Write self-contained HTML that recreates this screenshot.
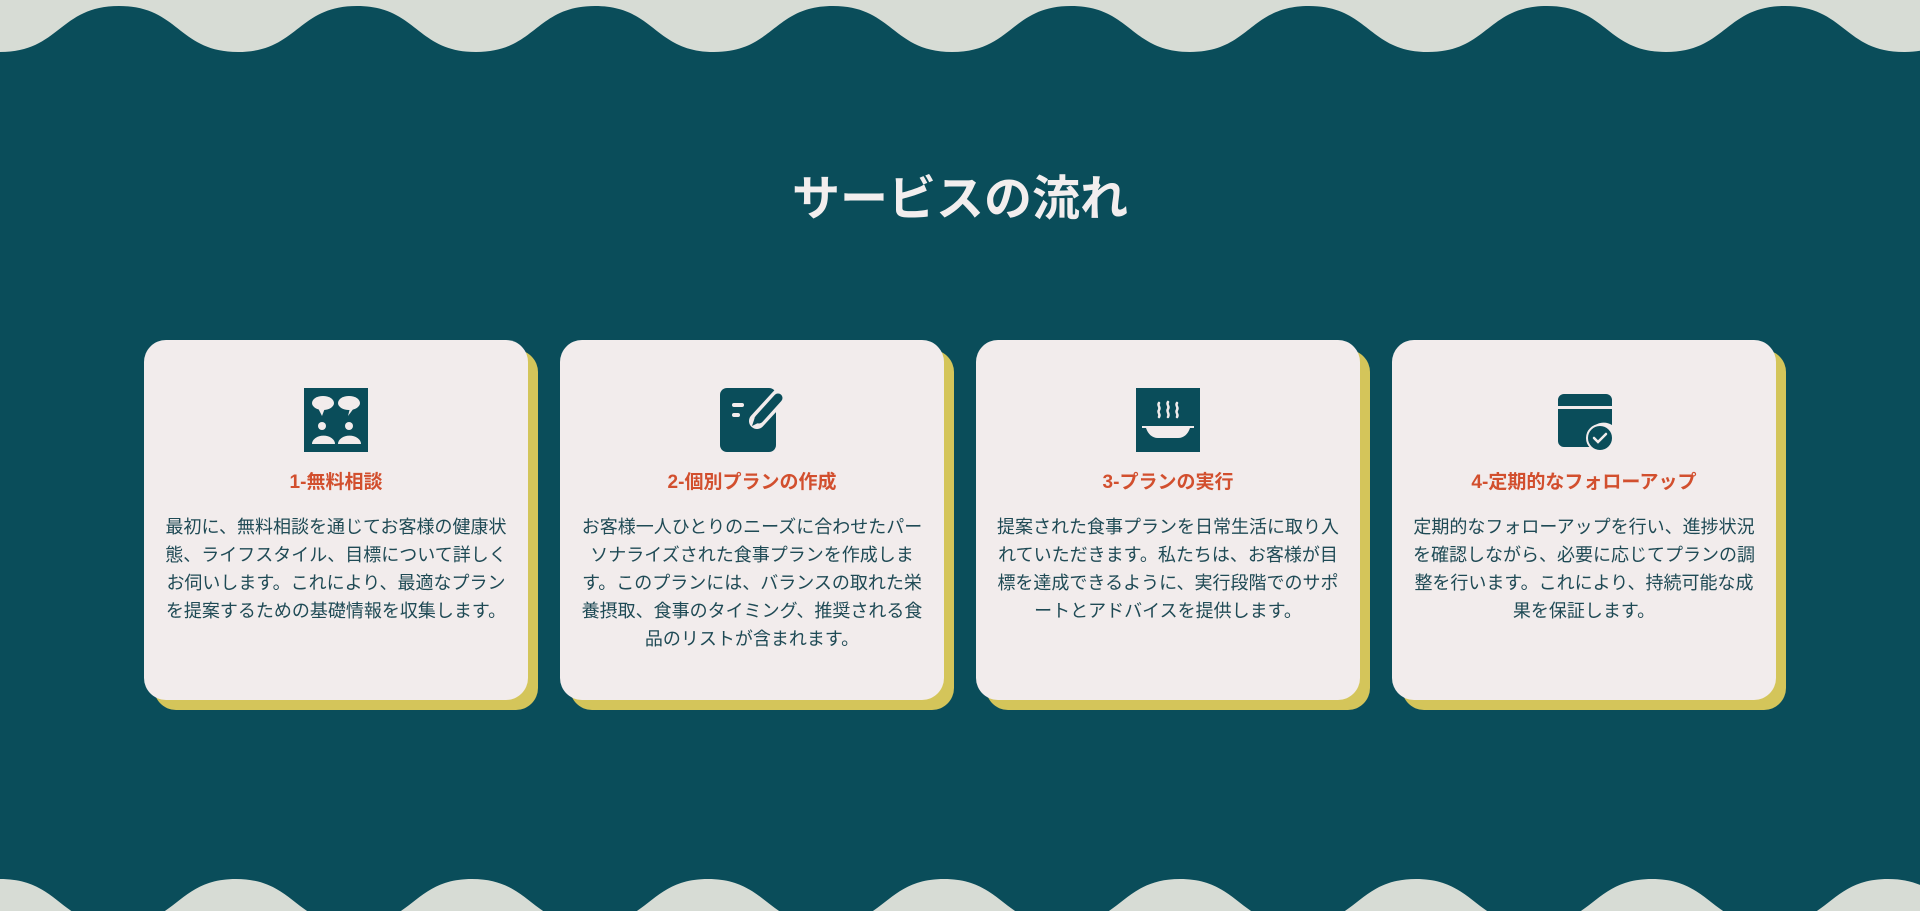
<!DOCTYPE html>
<html><head><meta charset="utf-8"><style>
*{margin:0;padding:0;box-sizing:border-box}
body{width:1920px;height:911px;background:#0a4d5a;position:relative;overflow:hidden;font-family:"Liberation Sans","Noto Sans CJK JP",sans-serif}
svg.w{position:absolute;left:0;width:1920px}
h1{position:absolute;top:170px;left:0;width:1920px;text-align:center;color:#f2eeee;font-size:48px;font-weight:bold;line-height:60px}
.card{position:absolute;top:340px;width:384px;height:360px;background:#f2ecec;border-radius:22px;box-shadow:10px 10px 0 #d4c55a;text-align:center}
.ic{position:absolute;left:160px;top:48px;width:64px;height:64px}
.t{position:absolute;top:130px;left:0;width:100%;color:#d24f2e;font-size:19px;font-weight:bold;line-height:26px}
.b{position:absolute;top:173px;left:0;width:100%;color:#1f4a55;font-size:18px;line-height:28px;white-space:nowrap}
</style></head><body>
<svg class="w" style="top:0" height="60" viewBox="0 0 1920 60"><rect width="1920" height="60" fill="#d7dcd5"/><path fill="#0a4d5a" d="M0 52C60 52 59 6 119 6s59 46 119 46s59 -46 119 -46s59 46 119 46s59 -46 119 -46s59 46 119 46s59 -46 119 -46s59 46 119 46s59 -46 119 -46s59 46 119 46s59 -46 119 -46s59 46 119 46s59 -46 119 -46s59 46 119 46s59 -46 119 -46s59 46 119 46s59 -46 119 -46s59 46 119 46V60H0Z"/></svg>
<svg class="w" style="top:851px" height="60" viewBox="0 0 1920 60"><path fill="#d7dcd5" d="M0 28C60 28 59 74 118 74s59 -46 118 -46s59 46 118 46s59 -46 118 -46s59 46 118 46s59 -46 118 -46s59 46 118 46s59 -46 118 -46s59 46 118 46s59 -46 118 -46s59 46 118 46s59 -46 118 -46s59 46 118 46s59 -46 118 -46s59 46 118 46s59 -46 118 -46s59 46 118 46s59 -46 118 -46V60H0Z"/></svg>
<h1>サービスの流れ</h1>

<div class="card" style="left:144px">
<svg class="ic" viewBox="0 0 64 64"><rect width="64" height="64" fill="#0a4d5a"/><g fill="#f2ecec"><ellipse cx="19" cy="15" rx="11" ry="7"/><path d="M14 20l4 8 3-8z"/><ellipse cx="45" cy="15" rx="11" ry="7"/><path d="M46 20l-2 8 6-8z"/><circle cx="18" cy="38" r="4"/><circle cx="45" cy="38" r="4"/><path d="M8 56a11 8 0 0 1 23 0z"/><path d="M34 56a11 8 0 0 1 23 0z"/></g></svg>
<div class="t">1-無料相談</div>
<div class="b">最初に、無料相談を通じてお客様の健康状<br>態、ライフスタイル、目標について詳しく<br>お伺いします。これにより、最適なプラン<br>を提案するための基礎情報を収集します。</div>
</div>

<div class="card" style="left:560px">
<svg class="ic" viewBox="0 0 64 64"><rect x="0" y="0" width="56" height="64" rx="7" fill="#0a4d5a"/><g fill="#f2ecec"><rect x="12" y="15" width="12" height="4" rx="2"/><rect x="12" y="25" width="8" height="4" rx="2"/></g><path d="M59 9L37 33" stroke="#f2ecec" stroke-width="16" stroke-linecap="round"/><path d="M58 10L39 31" stroke="#0a4d5a" stroke-width="9" stroke-linecap="round"/><path d="M32 38l3-9 5 5z" fill="#0a4d5a"/></svg>
<div class="t">2-個別プランの作成</div>
<div class="b">お客様一人ひとりのニーズに合わせたパー<br>ソナライズされた食事プランを作成しま<br>す。このプランには、バランスの取れた栄<br>養摂取、食事のタイミング、推奨される食<br>品のリストが含まれます。</div>
</div>

<div class="card" style="left:976px">
<svg class="ic" viewBox="0 0 64 64"><rect width="64" height="64" fill="#0a4d5a"/><g fill="none" stroke="#f2ecec" stroke-width="2.5" stroke-linecap="round"><path d="M23 15c-2 3 2 4 0 7s2 4 0 7"/><path d="M32 14c-2 3 2 4 0 7s2 4 0 8"/><path d="M41 15c-2 3 2 4 0 7s2 4 0 7"/></g><path fill="#f2ecec" d="M6 38h52v2h-4c-2 6-6 10-12 10H22c-6 0-10-4-12-10H6z"/></svg>
<div class="t">3-プランの実行</div>
<div class="b">提案された食事プランを日常生活に取り入<br>れていただきます。私たちは、お客様が目<br>標を達成できるように、実行段階でのサポ<br>ートとアドバイスを提供します。</div>
</div>

<div class="card" style="left:1392px">
<svg class="ic" viewBox="0 0 64 64"><path fill="#0a4d5a" d="M12 6h42a6 6 0 0 1 6 6v6H6v-6a6 6 0 0 1 6-6zM6 21h54v16a16 16 0 0 0-22 22H12a6 6 0 0 1-6-6z"/><circle cx="48" cy="50" r="13" fill="#0a4d5a" stroke="#f2ecec" stroke-width="2"/><path d="M42 50l4 4 8-8" fill="none" stroke="#f2ecec" stroke-width="2.5" stroke-linecap="round"/></svg>
<div class="t">4-定期的なフォローアップ</div>
<div class="b">定期的なフォローアップを行い、進捗状況<br>を確認しながら、必要に応じてプランの調<br>整を行います。これにより、持続可能な成<br>果を保証します。</div>
</div>
</body></html>
